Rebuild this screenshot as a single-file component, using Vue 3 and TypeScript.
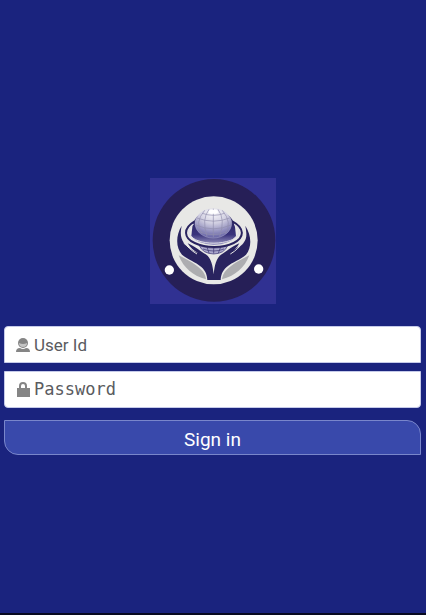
<script setup lang="ts">
import { ref } from 'vue'

const userId = ref<string>('')
const password = ref<string>('')
</script>

<template>
  <main class="page">
    <svg class="logo" viewBox="12 12 378 378" role="img" aria-label="Globe held in two hands">
      <defs>
        <radialGradient id="globe" cx="50%" cy="10%" r="90%">
          <stop offset="0" stop-color="#ffffff" />
          <stop offset="0.45" stop-color="#cfcde0" />
          <stop offset="1" stop-color="#6562a5" />
        </radialGradient>
        <linearGradient id="shade" x1="0" y1="0" x2="0" y2="1">
          <stop offset="0" stop-color="#29235f" />
          <stop offset="0.65" stop-color="#39337c" />
          <stop offset="1" stop-color="#9d9ac4" />
        </linearGradient>
      </defs>
      <rect x="12" y="12" width="378" height="378" fill="#303192" />
      <circle cx="204" cy="199" r="184" fill="#261f57" />
      <circle cx="203" cy="199" r="132" fill="#e8e8e6" />
      <path d="M98 244C118 254 136 263 152 275C168 287 178 298 180 316C142 306 112 282 98 244Z" fill="#adadb0" />
      <path d="M310 244C290 254 272 263 256 275C240 287 230 298 228 316C266 306 296 282 310 244Z" fill="#adadb0" />
      <path d="M160 215Q203 230 245 215Q235 239 203 240Q171 239 160 215Z" fill="#aaa7cc" stroke="#39336f" stroke-width="2" />
      <path d="M171 225Q203 237 234 225M203 217V239M183 219L189 237M224 219L217 237" fill="none" stroke="#39336f" stroke-width="2" />
      <path d="M139 159Q143 135 158 124H247Q262 135 267 159L270 186Q252 211 203 213Q154 210 136 186Z" fill="url(#shade)" />
      <path d="M146 142C110 163 113 192 146 207C180 223 230 223 263 207C295 191 298 163 259 142" fill="none" stroke="#29235f" stroke-width="6" />
      <path d="M143 151C119 167 126 188 153 199C184 211 224 210 254 199C282 188 287 167 264 151" fill="none" stroke="#dddbe7" stroke-width="3" />
      <ellipse cx="202" cy="148" rx="55" ry="44" fill="url(#globe)" stroke="#d5d4e6" stroke-width="1" />
      <g fill="none" stroke="#918eae" stroke-width="2">
        <path d="M153 132Q203 151 251 132M149 153Q203 176 255 153M162 174Q203 190 241 174M169 118Q203 130 235 118M202 104V190M189 106Q166 136 183 187M216 106Q239 136 221 187M176 109Q144 146 168 179M229 109Q260 146 238 179" />
      </g>
      <ellipse cx="202" cy="113" rx="14" ry="6" fill="#ffffff" />
      <path d="M107 155C88 186 90 223 108 242C126 257 148 263 166 279C180 292 183 304 184 318H224C225 304 228 292 242 279C260 263 284 257 300 242C318 221 317 184 298 155C302 179 304 193 292 207C279 219 263 229 246 238C263 231 274 221 280 208C254 220 240 233 227 241C210 252 206 275 203 301C200 275 196 252 179 241C165 233 151 220 125 208C133 221 143 231 158 238C137 230 125 220 114 207C104 193 102 179 107 155Z" fill="#29235f" />
      <path d="M113 207C122 214 136 231 153 240M292 207C283 214 270 231 253 240" fill="none" stroke="#e8e8e6" stroke-width="3" />
      <circle cx="70" cy="288" r="14" fill="#ffffff" />
      <circle cx="338" cy="285" r="14" fill="#ffffff" />
    </svg>

    <form class="form" @submit.prevent>
      <label class="field first">
        <svg class="icon" viewBox="0 0 14 16" aria-hidden="true">
          <circle cx="7" cy="6" r="5" fill="#858585" />
          <path d="M3 6Q7 8 11 6Q11 10 7 10Q3 10 3 6Z" fill="#c4c4c4" />
          <path d="M0 15Q0 11 4 11Q7 13 10 11Q14 11 14 15Z" fill="#858585" />
        </svg>
        <input v-model="userId" type="text" placeholder="User Id" aria-label="User Id" autocomplete="username" />
      </label>
      <label class="field last">
        <svg class="icon" viewBox="0 0 14 16" aria-hidden="true">
          <path d="M4 8V5Q4 2 7 2T10 5V8" fill="none" stroke="#858585" stroke-width="2" />
          <rect x="1" y="7" width="13" height="9" fill="#858585" />
        </svg>
        <input v-model="password" class="mono" type="password" placeholder="Password" aria-label="Password" autocomplete="current-password" />
      </label>
      <button class="submit" type="submit">Sign in</button>
    </form>
  </main>
</template>

<style>
body {
  background: #1a237e;
}
</style>

<style scoped>
.page {
  box-sizing: border-box;
  min-height: 100vh;
  display: flex;
  flex-direction: column;
  align-items: center;
  justify-content: center;
  gap: 22px;
  padding: 20px 5px 0 4px;
  border-bottom: 2px solid #080a20;
  background: #1a237e;
  font-family: Roboto, "Liberation Sans", sans-serif;
}

.logo {
  display: block;
  width: 126px;
  height: 126px;
}

.form {
  display: flex;
  flex-direction: column;
  width: 100%;
}

.field {
  box-sizing: border-box;
  display: flex;
  align-items: center;
  gap: 4px;
  height: 37px;
  padding: 0 11px;
  border: 1px solid #c5cae9;
  background: #ffffff;
}

.first {
  margin-bottom: 8px;
  border-radius: 4px 4px 0 0;
}

.last {
  margin-bottom: 12px;
  padding-bottom: 2px;
  border-radius: 0 0 4px 4px;
}

.icon {
  flex: none;
  width: 14px;
  height: 16px;
}

input {
  flex: 1;
  min-width: 0;
  height: 32px;
  padding: 0;
  border: 0;
  outline: 0;
  background: transparent;
  color: #4a4b50;
  font-family: inherit;
  font-size: 17px;
}

.mono {
  font-family: "DejaVu Sans Mono", monospace;
}

input::placeholder {
  color: #5a5b60;
  opacity: 1;
}

.submit {
  height: 35px;
  padding: 4px 0 0;
  border: 1px solid #7986cb;
  border-radius: 0 14px 0 14px;
  background: #3949ab;
  color: #ffffff;
  font-family: inherit;
  font-size: 19px;
}
</style>
